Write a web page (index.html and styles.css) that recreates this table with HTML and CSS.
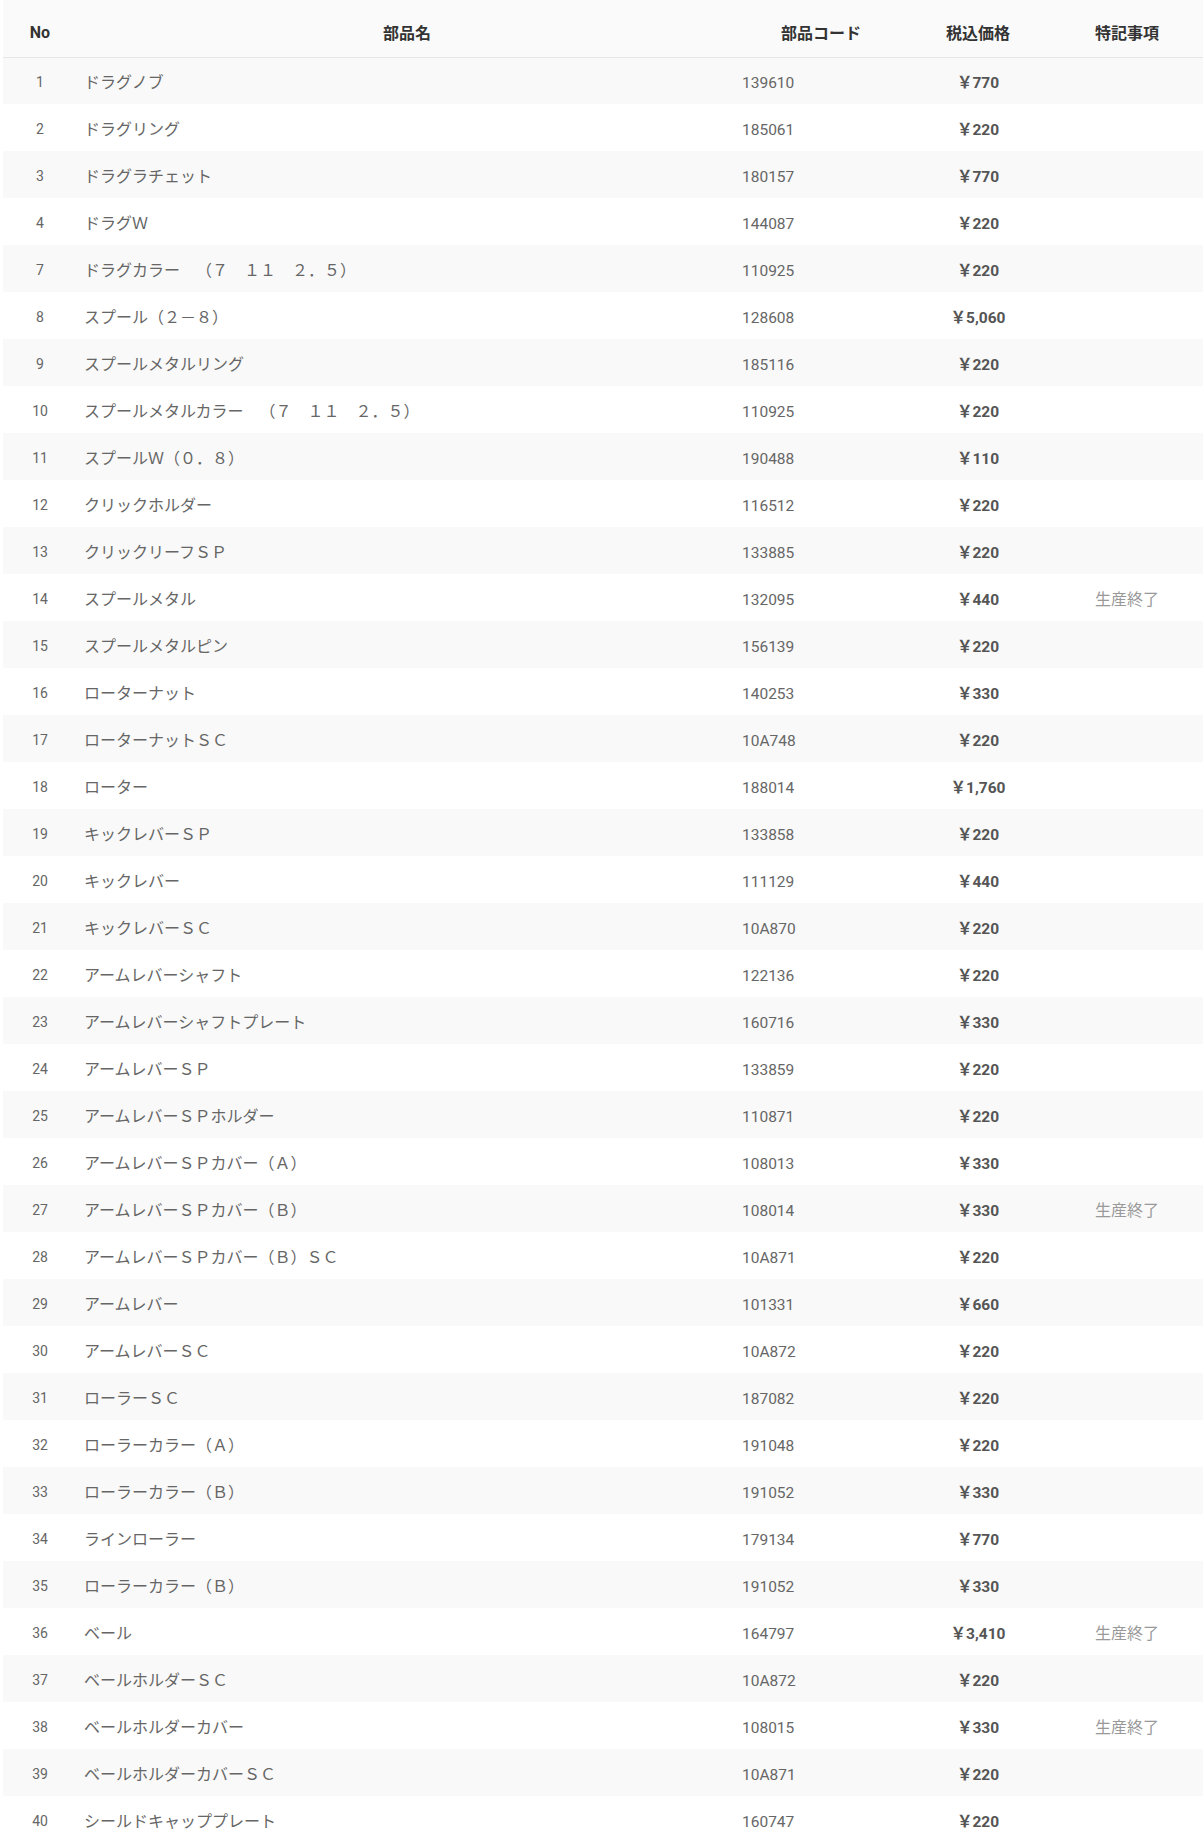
FILE: index.html
```html
<!DOCTYPE html>
<html lang="ja">
<head>
    <meta charset="UTF-8">
    <meta name="viewport" content="width=device-width, initial-scale=1.0">
    <title>パーツリスト</title>
    <link rel="stylesheet" href="styles.css">
</head>
<body>

    <div class="parts-list">
        <table>
            <thead>
                <tr>
                    <th class="col-no">No</th>
                    <th class="col-name">部品名</th>
                    <th class="col-code">部品コード</th>
                    <th class="col-price">税込価格</th>
                    <th class="col-note">特記事項</th>
                </tr>
            </thead>
            <tbody>
                <tr><td class="no">1</td><td class="name">ドラグノブ</td><td class="code">139610</td><td class="price">￥770</td><td class="note"></td></tr>
                <tr><td class="no">2</td><td class="name">ドラグリング</td><td class="code">185061</td><td class="price">￥220</td><td class="note"></td></tr>
                <tr><td class="no">3</td><td class="name">ドラグラチェット</td><td class="code">180157</td><td class="price">￥770</td><td class="note"></td></tr>
                <tr><td class="no">4</td><td class="name">ドラグＷ</td><td class="code">144087</td><td class="price">￥220</td><td class="note"></td></tr>
                <tr><td class="no">7</td><td class="name">ドラグカラー　（７　１１　２．５）</td><td class="code">110925</td><td class="price">￥220</td><td class="note"></td></tr>
                <tr><td class="no">8</td><td class="name">スプール（２－８）</td><td class="code">128608</td><td class="price">￥5,060</td><td class="note"></td></tr>
                <tr><td class="no">9</td><td class="name">スプールメタルリング</td><td class="code">185116</td><td class="price">￥220</td><td class="note"></td></tr>
                <tr><td class="no">10</td><td class="name">スプールメタルカラー　（７　１１　２．５）</td><td class="code">110925</td><td class="price">￥220</td><td class="note"></td></tr>
                <tr><td class="no">11</td><td class="name">スプールＷ（０．８）</td><td class="code">190488</td><td class="price">￥110</td><td class="note"></td></tr>
                <tr><td class="no">12</td><td class="name">クリックホルダー</td><td class="code">116512</td><td class="price">￥220</td><td class="note"></td></tr>
                <tr><td class="no">13</td><td class="name">クリックリーフＳＰ</td><td class="code">133885</td><td class="price">￥220</td><td class="note"></td></tr>
                <tr><td class="no">14</td><td class="name">スプールメタル</td><td class="code">132095</td><td class="price">￥440</td><td class="note">生産終了</td></tr>
                <tr><td class="no">15</td><td class="name">スプールメタルピン</td><td class="code">156139</td><td class="price">￥220</td><td class="note"></td></tr>
                <tr><td class="no">16</td><td class="name">ローターナット</td><td class="code">140253</td><td class="price">￥330</td><td class="note"></td></tr>
                <tr><td class="no">17</td><td class="name">ローターナットＳＣ</td><td class="code">10A748</td><td class="price">￥220</td><td class="note"></td></tr>
                <tr><td class="no">18</td><td class="name">ローター</td><td class="code">188014</td><td class="price">￥1,760</td><td class="note"></td></tr>
                <tr><td class="no">19</td><td class="name">キックレバーＳＰ</td><td class="code">133858</td><td class="price">￥220</td><td class="note"></td></tr>
                <tr><td class="no">20</td><td class="name">キックレバー</td><td class="code">111129</td><td class="price">￥440</td><td class="note"></td></tr>
                <tr><td class="no">21</td><td class="name">キックレバーＳＣ</td><td class="code">10A870</td><td class="price">￥220</td><td class="note"></td></tr>
                <tr><td class="no">22</td><td class="name">アームレバーシャフト</td><td class="code">122136</td><td class="price">￥220</td><td class="note"></td></tr>
                <tr><td class="no">23</td><td class="name">アームレバーシャフトプレート</td><td class="code">160716</td><td class="price">￥330</td><td class="note"></td></tr>
                <tr><td class="no">24</td><td class="name">アームレバーＳＰ</td><td class="code">133859</td><td class="price">￥220</td><td class="note"></td></tr>
                <tr><td class="no">25</td><td class="name">アームレバーＳＰホルダー</td><td class="code">110871</td><td class="price">￥220</td><td class="note"></td></tr>
                <tr><td class="no">26</td><td class="name">アームレバーＳＰカバー（Ａ）</td><td class="code">108013</td><td class="price">￥330</td><td class="note"></td></tr>
                <tr><td class="no">27</td><td class="name">アームレバーＳＰカバー（Ｂ）</td><td class="code">108014</td><td class="price">￥330</td><td class="note">生産終了</td></tr>
                <tr><td class="no">28</td><td class="name">アームレバーＳＰカバー（Ｂ）ＳＣ</td><td class="code">10A871</td><td class="price">￥220</td><td class="note"></td></tr>
                <tr><td class="no">29</td><td class="name">アームレバー</td><td class="code">101331</td><td class="price">￥660</td><td class="note"></td></tr>
                <tr><td class="no">30</td><td class="name">アームレバーＳＣ</td><td class="code">10A872</td><td class="price">￥220</td><td class="note"></td></tr>
                <tr><td class="no">31</td><td class="name">ローラーＳＣ</td><td class="code">187082</td><td class="price">￥220</td><td class="note"></td></tr>
                <tr><td class="no">32</td><td class="name">ローラーカラー（Ａ）</td><td class="code">191048</td><td class="price">￥220</td><td class="note"></td></tr>
                <tr><td class="no">33</td><td class="name">ローラーカラー（Ｂ）</td><td class="code">191052</td><td class="price">￥330</td><td class="note"></td></tr>
                <tr><td class="no">34</td><td class="name">ラインローラー</td><td class="code">179134</td><td class="price">￥770</td><td class="note"></td></tr>
                <tr><td class="no">35</td><td class="name">ローラーカラー（Ｂ）</td><td class="code">191052</td><td class="price">￥330</td><td class="note"></td></tr>
                <tr><td class="no">36</td><td class="name">ベール</td><td class="code">164797</td><td class="price">￥3,410</td><td class="note">生産終了</td></tr>
                <tr><td class="no">37</td><td class="name">ベールホルダーＳＣ</td><td class="code">10A872</td><td class="price">￥220</td><td class="note"></td></tr>
                <tr><td class="no">38</td><td class="name">ベールホルダーカバー</td><td class="code">108015</td><td class="price">￥330</td><td class="note">生産終了</td></tr>
                <tr><td class="no">39</td><td class="name">ベールホルダーカバーＳＣ</td><td class="code">10A871</td><td class="price">￥220</td><td class="note"></td></tr>
                <tr><td class="no">40</td><td class="name">シールドキャッププレート</td><td class="code">160747</td><td class="price">￥220</td><td class="note"></td></tr>
            </tbody>
        </table>
    </div>

</body>
</html>
```

FILE: styles.css
```css
/* Reset styles */
* {
    margin: 0;
    padding: 0;
    box-sizing: border-box;
}

body {
    font-family: Roboto, "Noto Sans CJK JP", sans-serif;
    background-color: #ffffff;
    color: #555;
    text-spacing-trim: space-all;
}

/* Parts table */
.parts-list {
    padding-left: 3px;
}

table {
    width: 100%;
    border-collapse: collapse;
    table-layout: fixed;
}

.col-no {
    width: 74px;
}

.col-name {
    width: 660px;
}

.col-code {
    width: 168px;
}

.col-price {
    width: 146px;
}

th {
    height: 57px;
    padding-top: 8px;
    background-color: #fafafa;
    border-bottom: 1px solid #e6e6e6;
    color: #333;
    font-size: 16px;
    font-weight: bold;
    text-align: center;
}

td {
    height: 47px;
    font-size: 16px;
    vertical-align: middle;
}

tbody tr:nth-child(odd) td {
    background-color: #f9f9f9;
}

td.no {
    padding-top: 3px;
    text-align: center;
    font-size: 14px;
    color: #666;
}

td.name {
    padding-left: 7px;
    color: #666;
    white-space: nowrap;
}

td.code {
    padding-top: 4px;
    padding-left: 5px;
    font-size: 15.5px;
    color: #666;
}

td.price {
    padding-top: 1px;
    text-align: center;
    font-size: 15.5px;
    font-weight: bold;
    color: #555;
}

td.note {
    text-align: center;
    color: #999;
}
```
